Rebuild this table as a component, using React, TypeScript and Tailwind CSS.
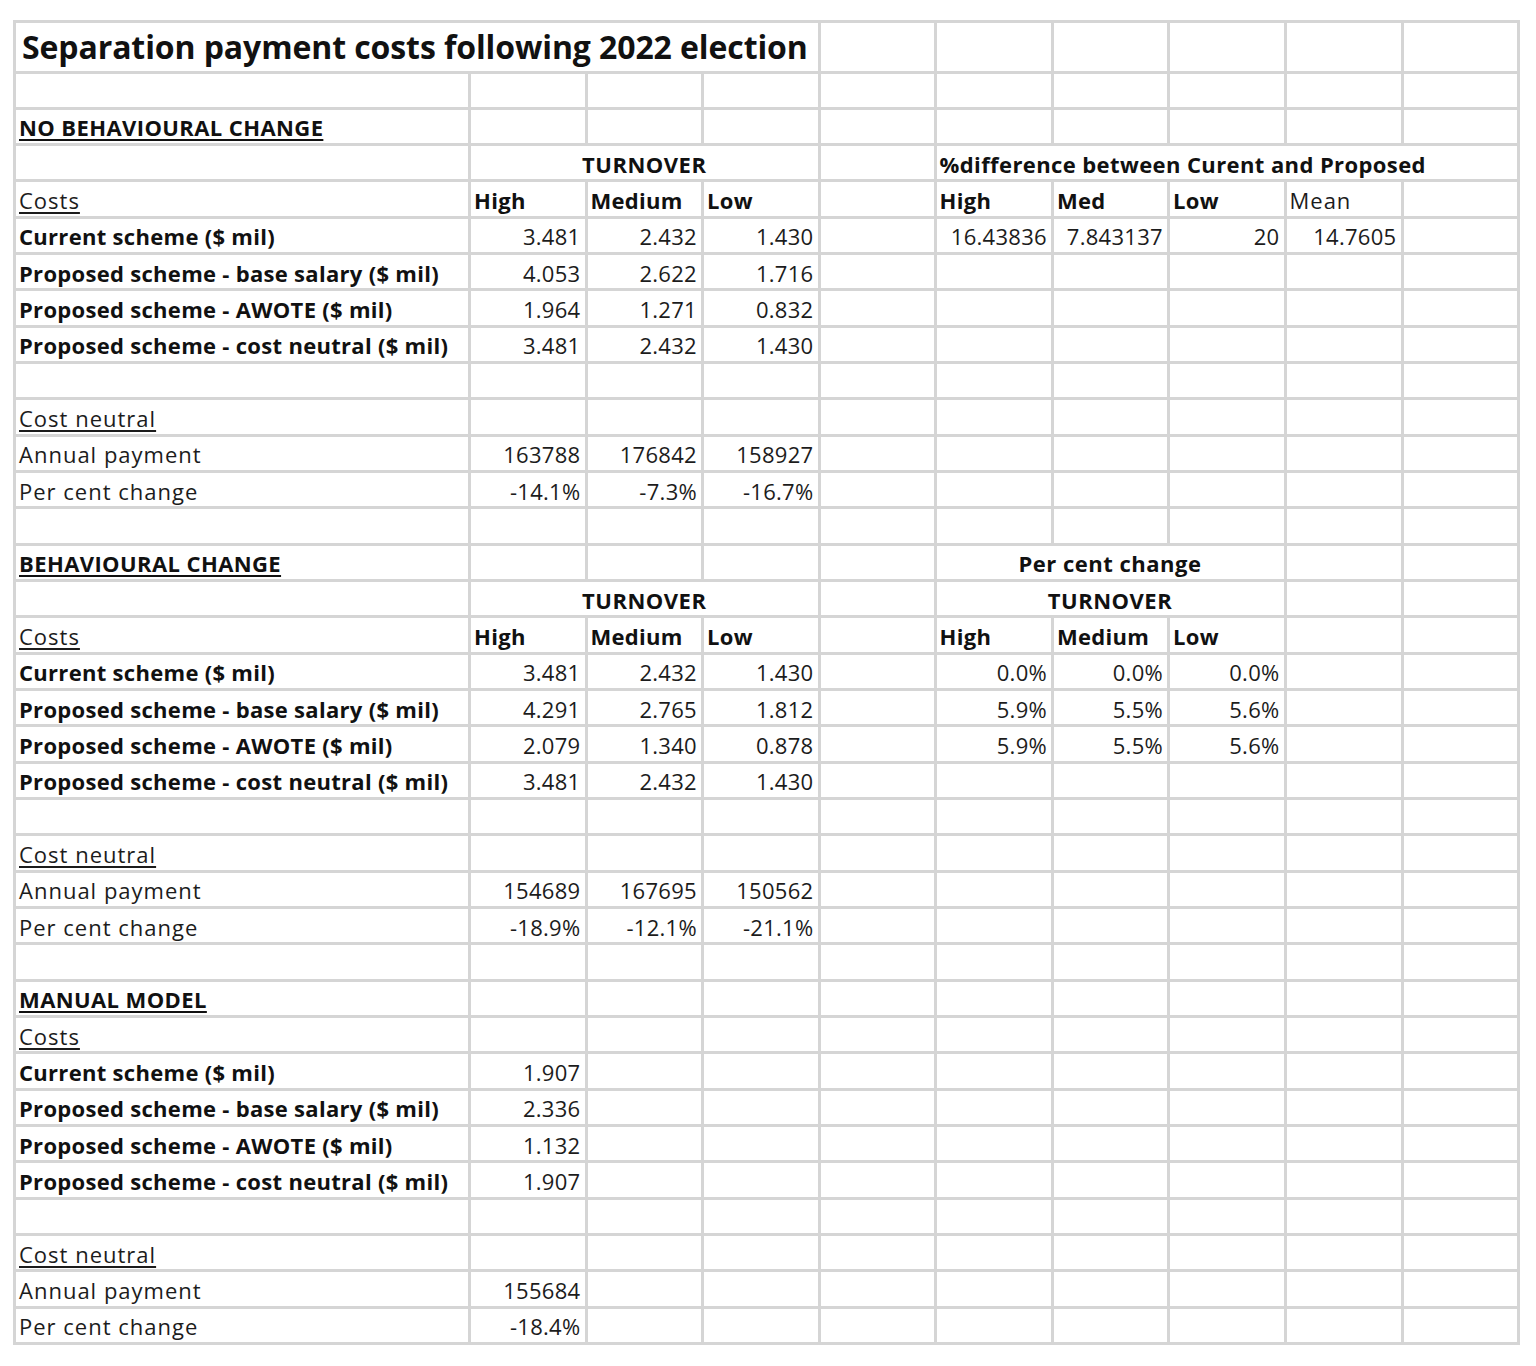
import React from "react";

type Kind = "title" | "b" | "bu" | "u" | "r" | "num" | "bc" | "bl";
type Cell = { t?: string; span?: number; k?: Kind };

const spanCls: Record<number, string> = {
  1: "",
  3: "col-span-3",
  4: "col-span-4",
  5: "col-span-5",
};

function row(...cells: Cell[]): Cell[] {
  const used = cells.reduce((s, c) => s + (c.span ?? 1), 0);
  const out = [...cells];
  for (let i = used; i < 10; i++) out.push({});
  return out;
}

const e: Cell = {};
const b = (t: string): Cell => ({ t, k: "b" });
const bu = (t: string): Cell => ({ t, k: "bu" });
const u = (t: string): Cell => ({ t, k: "u" });
const r = (t: string): Cell => ({ t, k: "r" });
const n = (t: string): Cell => ({ t, k: "num" });

const rows: Cell[][] = [
  row({ t: "Separation payment costs following 2022 election", span: 4, k: "title" }),
  row(),
  row(bu("NO BEHAVIOURAL CHANGE")),
  row(e, { t: "TURNOVER", span: 3, k: "bc" }, e, { t: "%difference between Curent and Proposed", span: 5, k: "bl" }),
  row(u("Costs"), b("High"), b("Medium"), b("Low"), e, b("High"), b("Med"), b("Low"), r("Mean")),
  row(b("Current scheme ($ mil)"), n("3.481"), n("2.432"), n("1.430"), e, n("16.43836"), n("7.843137"), n("20"), n("14.7605")),
  row(b("Proposed scheme - base salary ($ mil)"), n("4.053"), n("2.622"), n("1.716")),
  row(b("Proposed scheme - AWOTE ($ mil)"), n("1.964"), n("1.271"), n("0.832")),
  row(b("Proposed scheme - cost neutral ($ mil)"), n("3.481"), n("2.432"), n("1.430")),
  row(),
  row(u("Cost neutral")),
  row(r("Annual payment"), n("163788"), n("176842"), n("158927")),
  row(r("Per cent change"), n("-14.1%"), n("-7.3%"), n("-16.7%")),
  row(),
  row(bu("BEHAVIOURAL CHANGE"), e, e, e, e, { t: "Per cent change", span: 3, k: "bc" }),
  row(e, { t: "TURNOVER", span: 3, k: "bc" }, e, { t: "TURNOVER", span: 3, k: "bc" }),
  row(u("Costs"), b("High"), b("Medium"), b("Low"), e, b("High"), b("Medium"), b("Low")),
  row(b("Current scheme ($ mil)"), n("3.481"), n("2.432"), n("1.430"), e, n("0.0%"), n("0.0%"), n("0.0%")),
  row(b("Proposed scheme - base salary ($ mil)"), n("4.291"), n("2.765"), n("1.812"), e, n("5.9%"), n("5.5%"), n("5.6%")),
  row(b("Proposed scheme - AWOTE ($ mil)"), n("2.079"), n("1.340"), n("0.878"), e, n("5.9%"), n("5.5%"), n("5.6%")),
  row(b("Proposed scheme - cost neutral ($ mil)"), n("3.481"), n("2.432"), n("1.430")),
  row(),
  row(u("Cost neutral")),
  row(r("Annual payment"), n("154689"), n("167695"), n("150562")),
  row(r("Per cent change"), n("-18.9%"), n("-12.1%"), n("-21.1%")),
  row(),
  row(bu("MANUAL MODEL")),
  row(u("Costs")),
  row(b("Current scheme ($ mil)"), n("1.907")),
  row(b("Proposed scheme - base salary ($ mil)"), n("2.336")),
  row(b("Proposed scheme - AWOTE ($ mil)"), n("1.132")),
  row(b("Proposed scheme - cost neutral ($ mil)"), n("1.907")),
  row(),
  row(u("Cost neutral")),
  row(r("Annual payment"), n("155684")),
  row(r("Per cent change"), n("-18.4%")),
];

const kindCls: Record<Kind, string> = {
  title: "justify-start pl-[6px] pt-[1px] text-[32px] font-bold tracking-[-0.1px] text-[#111]",
  b: "justify-start pl-[3px] pt-[2px] text-[22px] font-bold tracking-[0.3px] text-[#111]",
  bu: "justify-start pl-[3px] pt-[2px] text-[22px] font-bold tracking-[0.4px] text-[#111] underline decoration-[2px] underline-offset-[3px]",
  u: "justify-start pl-[3px] pt-[2px] text-[22px] font-normal tracking-[1px] underline decoration-[1.5px] underline-offset-[3px]",
  r: "justify-start pl-[3px] pt-[2px] text-[22px] font-normal tracking-[1px]",
  num: "justify-end pr-[4px] pt-[2px] text-[22px] font-normal tracking-[0.3px]",
  bc: "justify-center pt-[2px] text-[22px] font-bold tracking-[0.5px] text-[#111]",
  bl: "justify-start pl-[3px] pt-[2px] text-[22px] font-bold tracking-[0.4px] text-[#111]",
};

export default function App() {
  return (
    <div className="min-h-[1366px] w-[1536px] bg-white pl-[13px] pt-[20px] font-['Open_Sans',sans-serif] text-[#1c1c1c]">
      <div className="grid w-fit grid-cols-[452px_113.5px_113.5px_113.5px_113px_114.5px_113px_113.5px_114px_113px] grid-rows-[47.5px_repeat(35,33.34px)] gap-[3px] bg-[#d5d5d5] p-[3px]">
        {rows.map((cells, ri) =>
          cells.map((c, ci) => (
            <div
              key={`${ri}-${ci}`}
              className={`flex items-center overflow-visible whitespace-nowrap bg-white leading-none ${spanCls[c.span ?? 1]} ${c.k ? kindCls[c.k] : ""}`}
            >
              {c.t ?? ""}
            </div>
          ))
        )}
      </div>
    </div>
  );
}
